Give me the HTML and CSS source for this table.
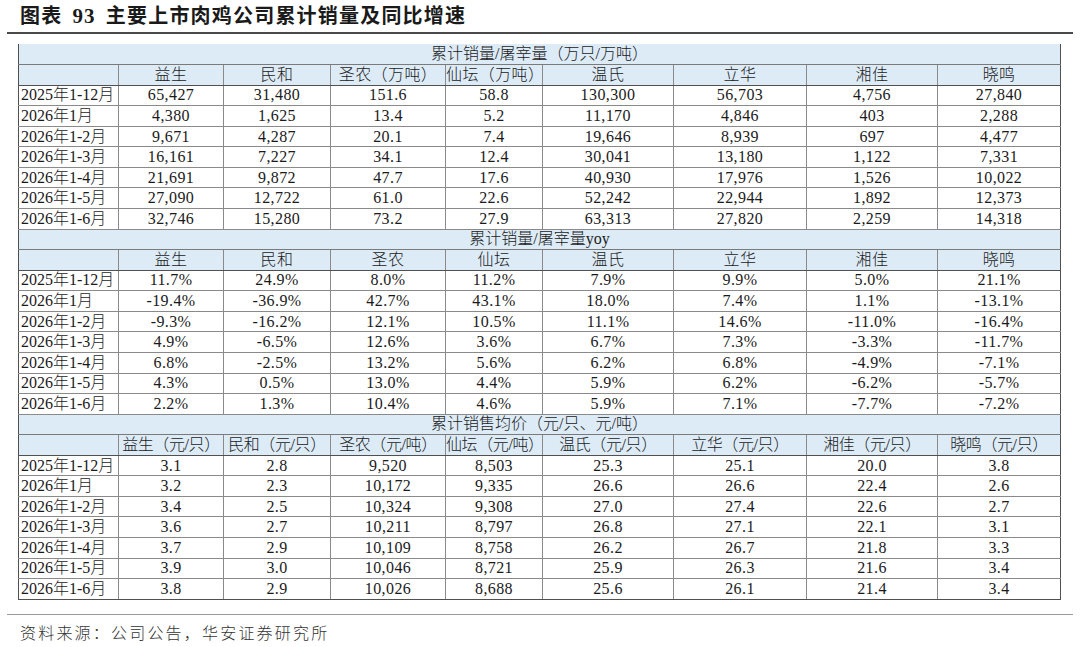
FILE: index.html
```html
<!DOCTYPE html>
<html lang="zh-CN">
<head>
<meta charset="utf-8">
<title>图表 93 主要上市肉鸡公司累计销量及同比增速</title>
<link rel="stylesheet" href="styles.css">
</head>
<body>
<div class="title">图表 <span class="num">93</span> 主要上市肉鸡公司累计销量及同比增速</div>
<table class="data">
  <colgroup>
    <col class="c-label"><col class="c1"><col class="c2"><col class="c3"><col class="c4"><col class="c5"><col class="c6"><col class="c7"><col class="c8">
  </colgroup>
  <tbody>
    <tr class="sect"><td colspan="9">累计销量/屠宰量（万只/万吨）</td></tr>
    <tr class="head"><td></td><td>益生</td><td>民和</td><td>圣农（万吨）</td><td>仙坛（万吨）</td><td>温氏</td><td>立华</td><td>湘佳</td><td>晓鸣</td></tr>
    <tr><td>2025年1-12月</td><td>65,427</td><td>31,480</td><td>151.6</td><td>58.8</td><td>130,300</td><td>56,703</td><td>4,756</td><td>27,840</td></tr>
    <tr><td>2026年1月</td><td>4,380</td><td>1,625</td><td>13.4</td><td>5.2</td><td>11,170</td><td>4,846</td><td>403</td><td>2,288</td></tr>
    <tr><td>2026年1-2月</td><td>9,671</td><td>4,287</td><td>20.1</td><td>7.4</td><td>19,646</td><td>8,939</td><td>697</td><td>4,477</td></tr>
    <tr><td>2026年1-3月</td><td>16,161</td><td>7,227</td><td>34.1</td><td>12.4</td><td>30,041</td><td>13,180</td><td>1,122</td><td>7,331</td></tr>
    <tr><td>2026年1-4月</td><td>21,691</td><td>9,872</td><td>47.7</td><td>17.6</td><td>40,930</td><td>17,976</td><td>1,526</td><td>10,022</td></tr>
    <tr><td>2026年1-5月</td><td>27,090</td><td>12,722</td><td>61.0</td><td>22.6</td><td>52,242</td><td>22,944</td><td>1,892</td><td>12,373</td></tr>
    <tr><td>2026年1-6月</td><td>32,746</td><td>15,280</td><td>73.2</td><td>27.9</td><td>63,313</td><td>27,820</td><td>2,259</td><td>14,318</td></tr>

    <tr class="sect"><td colspan="9">累计销量/屠宰量yoy</td></tr>
    <tr class="head"><td></td><td>益生</td><td>民和</td><td>圣农</td><td>仙坛</td><td>温氏</td><td>立华</td><td>湘佳</td><td>晓鸣</td></tr>
    <tr><td>2025年1-12月</td><td>11.7%</td><td>24.9%</td><td>8.0%</td><td>11.2%</td><td>7.9%</td><td>9.9%</td><td>5.0%</td><td>21.1%</td></tr>
    <tr><td>2026年1月</td><td>-19.4%</td><td>-36.9%</td><td>42.7%</td><td>43.1%</td><td>18.0%</td><td>7.4%</td><td>1.1%</td><td>-13.1%</td></tr>
    <tr><td>2026年1-2月</td><td>-9.3%</td><td>-16.2%</td><td>12.1%</td><td>10.5%</td><td>11.1%</td><td>14.6%</td><td>-11.0%</td><td>-16.4%</td></tr>
    <tr><td>2026年1-3月</td><td>4.9%</td><td>-6.5%</td><td>12.6%</td><td>3.6%</td><td>6.7%</td><td>7.3%</td><td>-3.3%</td><td>-11.7%</td></tr>
    <tr><td>2026年1-4月</td><td>6.8%</td><td>-2.5%</td><td>13.2%</td><td>5.6%</td><td>6.2%</td><td>6.8%</td><td>-4.9%</td><td>-7.1%</td></tr>
    <tr><td>2026年1-5月</td><td>4.3%</td><td>0.5%</td><td>13.0%</td><td>4.4%</td><td>5.9%</td><td>6.2%</td><td>-6.2%</td><td>-5.7%</td></tr>
    <tr><td>2026年1-6月</td><td>2.2%</td><td>1.3%</td><td>10.4%</td><td>4.6%</td><td>5.9%</td><td>7.1%</td><td>-7.7%</td><td>-7.2%</td></tr>

    <tr class="sect"><td colspan="9">累计销售均价（元/只、元/吨）</td></tr>
    <tr class="head tight"><td></td><td>益生（元/只）</td><td>民和（元/只）</td><td>圣农（元/吨）</td><td>仙坛（元/吨）</td><td>温氏（元/只）</td><td>立华（元/只）</td><td>湘佳（元/只）</td><td>晓鸣（元/只）</td></tr>
    <tr><td>2025年1-12月</td><td>3.1</td><td>2.8</td><td>9,520</td><td>8,503</td><td>25.3</td><td>25.1</td><td>20.0</td><td>3.8</td></tr>
    <tr><td>2026年1月</td><td>3.2</td><td>2.3</td><td>10,172</td><td>9,335</td><td>26.6</td><td>26.6</td><td>22.4</td><td>2.6</td></tr>
    <tr><td>2026年1-2月</td><td>3.4</td><td>2.5</td><td>10,324</td><td>9,308</td><td>27.0</td><td>27.4</td><td>22.6</td><td>2.7</td></tr>
    <tr><td>2026年1-3月</td><td>3.6</td><td>2.7</td><td>10,211</td><td>8,797</td><td>26.8</td><td>27.1</td><td>22.1</td><td>3.1</td></tr>
    <tr><td>2026年1-4月</td><td>3.7</td><td>2.9</td><td>10,109</td><td>8,758</td><td>26.2</td><td>26.7</td><td>21.8</td><td>3.3</td></tr>
    <tr><td>2026年1-5月</td><td>3.9</td><td>3.0</td><td>10,046</td><td>8,721</td><td>25.9</td><td>26.3</td><td>21.6</td><td>3.4</td></tr>
    <tr><td>2026年1-6月</td><td>3.8</td><td>2.9</td><td>10,026</td><td>8,688</td><td>25.6</td><td>26.1</td><td>21.4</td><td>3.4</td></tr>
  </tbody>
</table>
<div class="source">资料来源：公司公告，华安证券研究所</div>
</body>
</html>
```

FILE: styles.css
```css
html, body {
  margin: 0;
  padding: 0;
  background: #ffffff;
}

body {
  color: #1e1e1e;
  font-family: "Liberation Serif", "Noto Sans CJK SC", serif;
}

.title {
  margin: 0 7px;
  padding: 6px 0 0 13px;
  height: 34px;
  box-sizing: border-box;
  border-bottom: 2px solid #4a4a4a;
  font-family: "Liberation Serif", "Noto Sans CJK SC", serif;
  font-weight: bold;
  font-size: 20px;
  line-height: 21px;
  letter-spacing: 1.2px;
  color: #1a1a1a;
}

.title .num {
  font-size: 21px;
  letter-spacing: 1px;
  margin: 0 4px;
}

.data {
  margin: 10px 0 0 18px;
  width: 1042px;
  border-collapse: collapse;
  table-layout: fixed;
  font-size: 16px;
  font-weight: 300;
  color: #1a1a1a;
}

.c-label { width: 100px; }
.c1 { width: 105px; }
.c2 { width: 107px; }
.c3 { width: 115px; }
.c4 { width: 97px; }
.c5 { width: 131px; }
.c6 { width: 133px; }
.c7 { width: 131px; }
.c8 { width: 123px; }

.data td {
  height: 20.57px;
  padding: 0;
  line-height: 18px;
  text-align: center;
  white-space: nowrap;
  letter-spacing: 0.4px;
  border: 1px solid #8a8a8a;
  box-sizing: border-box;
}

.data td:first-child {
  text-align: left;
  padding-left: 2px;
  letter-spacing: 0;
  border-left: 1px solid #505050;
}

.data td:last-child {
  border-right: 1px solid #505050;
}

.data tr.sect td {
  text-align: center;
  padding-left: 0;
  background: #ddebf7;
  border-top: none;
  border-bottom: 1px solid #7a7a7a;
}

.data tr.head td {
  background: #ddebf7;
  border-bottom: 1px solid #505050;
}

.data tr.tight td {
  letter-spacing: -0.4px;
}

.data tr:last-child td {
  border-bottom: 1px solid #505050;
}

.source {
  margin: 14px 7px 0 7px;
  padding: 7px 0 0 13px;
  border-top: 1px solid #9a9a9a;
  font-family: "Noto Sans CJK SC", sans-serif;
  font-size: 16px;
  font-weight: 300;
  line-height: 20px;
  letter-spacing: 2.2px;
  color: #333333;
}
```
